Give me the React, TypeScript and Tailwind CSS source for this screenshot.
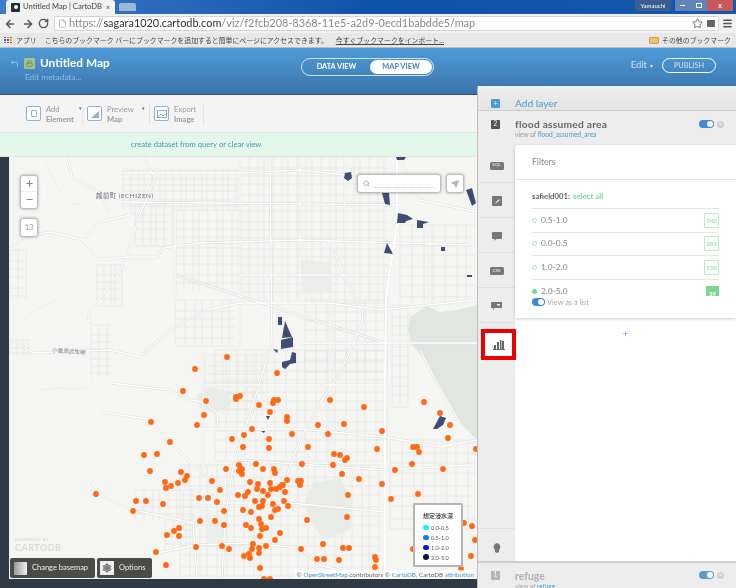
import React from "react";
import { ArrowLeft, ArrowRight, RotateCw, Star, Menu, Minus, Plus, Search, Send, Settings, File, CornerUpLeft, Lock } from "lucide-react";

const DOTS = [
  [227,357],[195,369],[277,373],[183,391],[206,401],[236,397],[240,396],[236,399],[259,405],[273,403],[274,400],[278,400],[270,412],
  [204,415],[287,417],[287,421],[151,422],[197,425],[252,429],[244,435],[170,442],[232,439],[269,439],[243,447],[269,448],[144,455],[157,454],
  [239,465],[256,464],[226,469],[263,469],[242,469],[274,469],[330,400],[364,407],[424,402],[440,413],[450,425],[448,438],[318,425],[344,424],
  [292,434],[328,434],[382,431],[308,447],[377,449],[413,447],[417,447],[419,452],[476,449],[334,454],[340,455],[347,458],[345,460],[302,464],
  [333,465],[412,464],[395,470],[443,469],[342,474],[359,479],[287,480],[298,481],[301,481],[300,485],[283,485],[280,487],[382,484],[150,471],
  [181,472],[239,471],[242,474],[275,473],[187,476],[185,480],[165,482],[178,483],[171,486],[166,488],[212,481],[250,482],[258,484],[270,483],
  [282,485],[271,489],[276,489],[285,492],[220,490],[257,489],[263,491],[248,492],[238,495],[245,496],[268,495],[96,494],[136,501],[146,501],
  [199,498],[208,498],[217,502],[255,501],[263,501],[284,501],[273,504],[163,504],[259,507],[262,506],[288,506],[133,511],[224,511],[243,510],
  [251,512],[275,510],[278,509],[271,517],[259,519],[200,521],[215,521],[224,525],[246,525],[261,524],[251,528],[262,529],[266,528],[179,528],
  [174,531],[280,533],[167,535],[179,536],[260,536],[275,540],[253,544],[266,546],[252,549],[259,548],[196,547],[222,546],[229,549],[156,552],
  [259,553],[249,554],[244,556],[250,558],[166,565],[260,568],[264,579],[270,579],[348,495],[347,517],[307,520],[323,544],[301,549],[343,548],
  [349,548],[317,559],[324,559],[339,560],[375,557],[376,560],[375,567],[418,494],[391,499],[413,549],[464,523],[472,526],[475,540],[471,556],[461,569],
];

const AREAS = [
  "345,173 351,172 352,178 348,181 344,178","382,193 389,193 390,205 385,204","398,213 407,215 413,219 406,221 405,223 397,223",
  "417,220 429,222 423,224 423,228 417,228","466,190 472,188 476,203 472,206","387,243 393,254 384,253","441,247 445,247 445,251 441,251",
  "467,275 472,275 472,277 467,277","278,317 282,317 282,325 278,325","285,321 292,337 282,338","281,340 293,337 293,347 281,349",
  "273,349 278,350 277,353","292,352 296,353 296,363 290,364 285,369 282,367 282,362 290,360","440,416 446,418 443,425 437,429 433,429",
  "396,157 406,157 404,160 397,160","266,416 270,416 268,420","261,431 265,431 264,433",
];

const MAIN_ROADS = [
  "397,157 397,225 390,270 386,300 385,400 385,579",
  "143,157 155,178 138,220 128,253 117,277 90,310 88,320 93,325",
  "10,247 33,235 50,232 83,240 98,260 127,257 157,257 163,248 200,243 300,240 470,245",
  "68,157 72,177 100,193 110,213",
  "83,240 100,222 130,215 137,208",
  "10,338 33,353 110,350 140,357 173,327 207,310 240,303 330,303 380,310 477,300",
  "327,240 340,263 343,275 362,310 363,320 352,347 340,373 322,400 300,440 285,480",
  "110,383 170,390 190,400 203,402 217,413 218,428",
  "100,412 147,419 173,445 193,465 207,477 250,500",
  "203,350 203,470",
  "270,350 233,467 225,520 222,579",
  "90,480 103,497 133,510 167,517 193,523 197,579",
  "157,553 197,545 247,543 300,548 320,565 345,572",
  "200,503 290,503 385,512",
  "203,429 300,429 385,437 440,447 477,440",
  "120,202 400,205",
  "123,173 240,173 300,170 345,175",
  "420,350 437,383 447,400 460,423",
  "175,275 385,343 477,343",
  "240,460 385,470 470,465",
  "400,160 420,200 477,212",
  "240,157 240,350",
  "300,157 300,300",
  "270,157 272,350",
  "345,157 345,240",
  "430,230 430,305",
  "443,440 443,579",
  "330,303 330,470",
  "240,275 390,275",
  "205,385 385,385",
  "300,343 385,343",
  "175,210 175,300",
];

const GRIDS = [
  [123,170,115,40,7,7],[175,210,65,80,8,9],[135,205,35,40,7,8],[97,265,25,40,6,8],[91,325,20,52,7,8],[175,300,60,45,9,9],
  [240,157,148,145,8,9],[400,225,75,78,11,10],[305,300,80,70,10,10],[215,350,170,110,10,10],[180,465,200,112,9,10],
  [390,440,85,90,11,11],[135,490,60,30,8,8],[165,520,30,30,7,8],[205,355,60,60,8,9],[10,250,14,50,7,9],[10,340,20,16,6,6],[392,305,16,100,7,10],
];

// thin street grid, slightly uneven so it doesn't read as graph paper
function gridPath([x, y, w, h, dx, dy]: number[]) {
  let d = "";
  for (let i = 0, px = x; px <= x + w; i++, px += dx) d += `M${px + (i * 7) % 3} ${y}V${y + h}`;
  for (let i = 0, py = y; py <= y + h; i++, py += dy) d += `M${x} ${py + (i * 5) % 3}H${x + w}`;
  return d;
}

function MapDrawing() {
  return (
    <svg viewBox="9 157 468 422" className="absolute inset-0 h-full w-full">
      <rect x="9" y="157" width="468" height="422" fill="#f5f5f3" />
      {GRIDS.map((g, i) => (
        <path key={i} d={gridPath(g)} fill="none" stroke="#e6e6e5" strokeWidth="0.8" />
      ))}
      <path d="M20 325C40 300 50 310 65 290M40 390C70 385 80 395 95 380M45 163C60 190 70 215 85 200" fill="none" stroke="#ebebea" strokeWidth="0.8" />
      <polygon points="410,317 427,306 440,312 457,310 477,305 477,440 462,425 447,400 437,383 425,360 412,345 408,330" fill="#e1e6e3" />
      <polygon points="305,500 313,483 340,478 352,500 350,530 323,540 307,513" fill="#eaecea" />
      <polygon points="197,395 210,387 228,392 231,405 215,413 200,408" fill="#eaecea" />
      <polygon points="301,260 330,262 333,293 303,293" fill="#eceeec" />
      <polygon points="208,517 222,520 224,547 207,545" fill="#eceeec" />
      {MAIN_ROADS.map((p, i) => (
        <polyline key={i} points={p} fill="none" stroke="#dcdcdb" strokeWidth="2.4" strokeLinejoin="round" />
      ))}
      {MAIN_ROADS.map((p, i) => (
        <polyline key={i} points={p} fill="none" stroke="#ffffff" strokeWidth={i === 0 ? 2.2 : 1.3} strokeLinejoin="round" />
      ))}
      {AREAS.map((p) => (
        <polygon key={p} points={p} fill="#3f4e74" />
      ))}
      {DOTS.map(([x, y], i) => (
        <circle key={i} cx={x} cy={y} r="2.9" fill="#ff6a13" />
      ))}
      <text x="96" y="198" fontSize="6.4" letterSpacing="0.5" fill="#6f7480">越前町 (ECHIZEN)</text>
      <text x="52" y="352" fontSize="5.6" fill="#7f838c" transform="rotate(4 52 352)">小豊原武生線</text>
    </svg>
  );
}

function BrowserChrome() {
  return (
    <div className="flex flex-col">
      <div className="flex h-[14px] items-start bg-gradient-to-r from-[#3f7cc6] via-[#0f53a8] to-[#1557ae] pl-[6px]">
        <div className="flex h-[14px] w-[109px] items-center rounded-t-[3px] bg-[#f2f2f2] pl-[5px] text-[7.6px] text-[#444]">
          <span className="mr-[3px] flex h-[9px] w-[9px] shrink-0 items-center justify-center rounded-[1px] bg-[#22303a]">
            <span className="h-[4px] w-[4px] rounded-full bg-white" />
          </span>
          <span className="whitespace-nowrap">Untitled Map | CartoDB</span>
          <span className="ml-auto pr-[5px] text-[7px]">×</span>
        </div>
        <div className="mt-[3px] ml-[4px] h-[8px] w-[17px] rounded-t-[2px] bg-[#9db7d8]" />
        <div className="ml-auto flex h-[11px] items-stretch gap-[4px] pr-[3px]">
          <div className="flex w-[36px] items-center justify-center rounded-b-[2px] bg-[#385d8e] text-[6px] text-white">Yamauchi</div>
          <div className="flex w-[58px] rounded-b-[2px] text-white">
            <div className="flex w-[15px] items-center justify-center bg-[#5f86b6]"><span className="h-[1.5px] w-[5px] bg-white" /></div>
            <div className="flex w-[17px] items-center justify-center bg-[#5f86b6]"><span className="h-[5px] w-[6px] border border-white" /></div>
            <div className="flex w-[26px] items-center justify-center bg-[#c9575a] text-[7px] font-bold">x</div>
          </div>
        </div>
      </div>
      <div className="flex h-[19px] items-center bg-[#f1f1f1] pl-[4px] pr-[3px] text-[#555]">
        <ArrowLeft size={12} strokeWidth={3} className="shrink-0" />
        <ArrowRight size={12} strokeWidth={3} className="ml-[6px] shrink-0" />
        <RotateCw size={11} strokeWidth={3} className="ml-[4px] shrink-0" />
        <div className="ml-[5px] flex h-[15px] flex-1 items-center rounded-[1px] border border-[#d5d5d5] bg-white pl-[3px] text-[10.9px] text-[#8a8a8a]">
          <File size={9} className="mr-[2px] shrink-0 text-[#aaa]" />
          <span>https://</span><span className="text-[#333]">sagara1020.cartodb.com</span><span>/viz/f2fcb208-8368-11e5-a2d9-0ecd1babdde5/map</span>
          <Star size={11} className="ml-auto mr-[4px] text-[#666]" />
          <span className="mr-[3px] h-[7px] w-[8px] bg-[#666]" />
        </div>
        <Menu size={11} strokeWidth={3} className="ml-[3px] shrink-0" />
      </div>
      <div className="flex h-[15px] items-center border-b border-[#bdbdbd] bg-[#e8e8e8] pl-[4px] pr-[5px] text-[6.9px] text-[#444]">
        <span className="mr-[2px] grid h-[7px] w-[8px] grid-cols-3 gap-px">
          {["#d33","#e93","#3a3","#36c","#d33","#e93","#3a3","#36c","#d33"].map((c, i) => (
            <span key={i} className="h-[1.5px]" style={{ backgroundColor: c }} />
          ))}
        </span>
        <span className="ml-[2px]">アプリ</span>
        <span className="ml-[8px]">こちらのブックマーク バーにブックマークを追加すると簡単にページにアクセスできます。</span>
        <span className="ml-[8px] underline">今すぐブックマークをインポート...</span>
        <span className="ml-auto mr-[3px] h-[7px] w-[10px] rounded-[1px] border border-[#c9a04a] bg-[#eec56f]" />
        <span>その他のブックマーク</span>
      </div>
    </div>
  );
}

function CartoHeader() {
  return (
    <div className="relative flex h-[47px] items-start border-b border-[#35516b] bg-gradient-to-b from-[#4f9cd9] to-[#3a74ab] text-white">
      <div className="flex flex-col">
        <div className="mt-[8px] flex items-center">
          <CornerUpLeft size={9} className="ml-[10px] text-[#a5c9e8]" />
          <span className="ml-[5px] flex h-[11px] w-[11px] items-center justify-center rounded-[1px] bg-[#a3c28a]">
            <Lock size={7} className="text-[#5f7a4c]" />
          </span>
          <span className="ml-[5px] text-[11.8px] font-bold leading-[14px]">Untitled Map</span>
        </div>
        <span className="ml-[25px] mt-[2px] text-[8.3px] leading-[10px] text-[#8dbde2]">Edit metadata...</span>
      </div>
      <div className="absolute left-[301px] top-[10px] flex h-[18px] w-[133px] items-center rounded-full border border-[#cfe3f3] p-px text-[7.4px] font-bold">
        <span className="w-[67px] text-center">DATA VIEW</span>
        <span className="flex h-full flex-1 items-center justify-center rounded-full bg-white text-[#4d84b5]">MAP VIEW</span>
      </div>
      <div className="ml-auto mt-[10px] flex items-center pr-[20px] text-[9.5px]">
        <span className="text-[#cfe3f3]">Edit</span>
        <span className="ml-[3px] text-[6px] text-[#cfe3f3]">▾</span>
        <span className="ml-[9px] flex h-[15px] w-[54px] items-center justify-center rounded-full border border-white text-[7.4px] text-[#cfe3f3]">PUBLISH</span>
      </div>
    </div>
  );
}

function ToolButton({ top, bottom, caret, icon, width }: { top: string; bottom: string; caret?: boolean; icon: React.ReactNode; width: string }) {
  return (
    <div className={`flex h-[22px] items-center gap-[5px] border-r border-[#e3e3e3] pr-[4px] ${width}`}>
      <span className="flex h-[15px] w-[15px] shrink-0 items-center justify-center rounded-[2px] border border-[#8fb2d2] bg-white">{icon}</span>
      <div className="flex flex-col text-[7.6px] leading-[10px] text-[#9a9a9a]">
        <span>{top}</span>
        <span className="font-bold">{bottom}</span>
      </div>
      {caret && <span className="-mt-[10px] ml-auto text-[5px] text-[#666]">▾</span>}
    </div>
  );
}

function MapToolbar() {
  return (
    <>
      <div className="flex h-[37px] items-center gap-[4px] bg-[#f4f4f4] pl-[26px]">
        <ToolButton width="w-[57px]" top="Add" bottom="Element" caret icon={<span className="h-[7px] w-[6px] rounded-[1px] border border-[#8fb2d2]" />} />
        <ToolButton width="w-[63px]" top="Preview" bottom="Map" caret icon={<svg width="10" height="8" viewBox="0 0 10 8"><path d="M1 8L9 1V8Z" fill="#8fb2d2" /></svg>} />
        <ToolButton width="w-[50px]" top="Export" bottom="Image" icon={<svg width="10" height="8" viewBox="0 0 10 8"><rect x=".5" y=".5" width="9" height="7" fill="none" stroke="#8fb2d2" /><path d="M1 7L4 4L6 6L8 4L9 5" fill="none" stroke="#8fb2d2" /></svg>} />
      </div>
      <div className="flex h-[25px] items-center border-y border-[#dbe9df] bg-[#e3f7ea] pl-[131px] text-[7.6px] text-[#6b8a8a]">
        <span className="text-[#3f9cb8]">create dataset from query</span>
        <span className="mx-[2px]">or</span>
        <span className="text-[#3f9cb8]">clear view</span>
      </div>
    </>
  );
}

function MapPanel() {
  const card = "bg-white shadow-[0_0_3px_1px_rgba(0,0,0,0.35)]";
  return (
    <div className="relative h-[422px] w-[468px] overflow-hidden">
      <MapDrawing />
      <div className={`absolute left-[12px] top-[19px] flex h-[32px] w-[16px] flex-col items-center rounded-[2px] text-[#888] ${card}`}>
        <Plus size={9} strokeWidth={3} className="mt-[3px]" />
        <span className="mt-[3px] h-px w-full bg-[#eee]" />
        <Minus size={9} strokeWidth={3} className="mt-[3px]" />
      </div>
      <div className={`absolute left-[12px] top-[62px] flex h-[17px] w-[16px] items-center justify-center rounded-[2px] text-[7.5px] text-[#999] ${card}`}>13</div>
      <div className={`absolute left-[349px] top-[18px] flex h-[17px] w-[82px] items-center rounded-[2px] pl-[5px] ${card}`}>
        <Search size={7} strokeWidth={3} className="text-[#aaa]" />
        <span className="ml-[4px] mt-[8px] h-0 w-[60px] border-b border-dotted border-[#ccc]" />
      </div>
      <div className={`absolute left-[438px] top-[18px] flex h-[17px] w-[16px] items-center justify-center rounded-[2px] ${card}`}>
        <Send size={8} className="text-[#aaa]" fill="#bbb" />
      </div>
      <div className="absolute left-[6px] top-[380px] flex flex-col text-[#dadada]">
        <span className="text-[4.5px] font-bold leading-[6px] tracking-[0.5px]">POWERED BY</span>
        <span className="text-[9px] font-bold leading-[9px] tracking-[0.5px]">CARTODB</span>
      </div>
      <div className="absolute left-[1px] top-[401px] flex h-[20px] gap-[2px] whitespace-nowrap text-[7.5px] text-[#eee]">
        <div className="flex w-[85px] items-center rounded-[2px] bg-[#4a4a48] pl-[4px]">
          <span className="h-[13px] w-[13px] shrink-0 rounded-[1px] bg-gradient-to-r from-[#999] to-[#f3f3f3]" />
          <span className="ml-[5px]">Change basemap</span>
        </div>
        <div className="flex w-[55px] items-center rounded-[2px] bg-[#4a4a48] pl-[3px]">
          <span className="flex h-[14px] w-[14px] shrink-0 items-center justify-center bg-[#eee]"><Settings size={10} className="text-[#666]" fill="#999" /></span>
          <span className="ml-[5px]">Options</span>
        </div>
      </div>
      <div className="absolute left-[404px] top-[346px] flex h-[64px] w-[50px] flex-col rounded-[2px] border-2 border-[#b5b5b5] bg-white pl-[8px] pt-[6px] text-[#555]">
        <span className="text-[6px] font-bold leading-[9px]">想定浸水深</span>
        <div className="mt-[4px] flex flex-col gap-[2.9px] text-[5.6px] leading-[7px]">
          {[["#12f5f0","0.0-0.5"],["#0f7cf0","0.5-1.0"],["#0a10e0","1.0-2.0"],["#0b0f45","2.0-5.0"]].map(([c, t]) => (
            <div key={t} className="flex items-center gap-[2.5px]">
              <span className="h-[5.5px] w-[5.5px] rounded-full" style={{ backgroundColor: c }} />
              <span>{t}</span>
            </div>
          ))}
        </div>
      </div>
      <div className="absolute right-[3px] top-[413px] whitespace-nowrap bg-white/70 pl-[2px] text-[6.3px] leading-[9px] text-[#666]">
        © <span className="text-[#3f9cc6]">OpenStreetMap</span> contributors © <span className="text-[#3f9cc6]">CartoDB</span>, CartoDB <span className="text-[#3f9cc6]">attribution</span>
      </div>
    </div>
  );
}

function Toggle({ muted }: { muted?: boolean }) {
  return (
    <span className={`flex h-[8px] w-[15px] items-center justify-end rounded-full pr-px ${muted ? "bg-[#5b9ad2]" : "bg-[#3f8cd0]"}`}>
      <span className="h-[6px] w-[6px] rounded-full bg-white" />
    </span>
  );
}

function CloseDot() {
  return (
    <span className="flex h-[7px] w-[7px] items-center justify-center rounded-full bg-[#d0d0d0] text-[5px] leading-none text-white">×</span>
  );
}

const badge = "flex h-[8px] w-[14px] items-center justify-center rounded-[1.5px] bg-[#777] text-[4.5px] font-bold leading-none text-[#ddd]";

const TABS: { key: string; h: string; icon: React.ReactNode }[] = [
  { key: "sql", h: "h-[38px] pt-[4px]", icon: <span className={badge}>SQL</span> },
  { key: "wizard", h: "h-[35px] pt-[2px]", icon: <svg width="10" height="10" viewBox="0 0 10 10"><rect width="10" height="10" rx="1" fill="#777" /><path d="M3 7L7 3L8 4L4 7.5Z" fill="#eee" /></svg> },
  { key: "infowindow", h: "h-[35px] pt-[2px]", icon: <svg width="10" height="9" viewBox="0 0 10 9"><path d="M1 0H9Q10 0 10 1V6Q10 7 9 7H4L2.500 9V7H1Q0 7 0 6V1Q0 0 1 0Z" fill="#777" /></svg> },
  { key: "css", h: "h-[35px] pt-[2px]", icon: <span className={badge}>CSS</span> },
  { key: "legend", h: "h-[35px] pt-[2px]", icon: <svg width="11" height="10" viewBox="0 0 11 10"><path d="M0 1H11V7H3V10L2 7H0Z" fill="#777" /><rect x="6" y="3" width="3" height="1.500" fill="#eee" /></svg> },
];

function FilterRow({ label, count, active }: { label: string; count: string; active?: boolean }) {
  return (
    <div className={`flex ${active ? "h-[23px] items-start pt-[6px]" : "h-[23.6px] items-center border-b border-[#e8e8e8]"}`}>
      <span className={`${active ? "mt-[3px] bg-[#7bd88f]" : "border border-[#a8e6b6]"} h-[5px] w-[5px] rounded-full`} />
      <span className="ml-[4px] text-[8.4px] leading-[11px] text-[#888]">{label}</span>
      {active ? (
        <span className="ml-auto h-[10px] w-[13px] overflow-hidden bg-[#7bd88f] pt-[3px] text-center text-[6px] font-bold text-white">39</span>
      ) : (
        <span className="ml-auto flex h-[15px] w-[15px] items-center justify-center rounded-[1px] border border-[#bdeac8] text-[6px] font-bold text-[#a5dcb4]">{count}</span>
      )}
    </div>
  );
}

function LayerPanel() {
  return (
    <div className="absolute left-[477px] top-[86px] flex h-[502px] w-[259px] flex-col rounded-tl-[3px] border-l border-[#bdbdbd] bg-[#ededed] text-[#666]">
      <div className="flex h-[24px] shrink-0 items-end bg-gradient-to-b from-[#efefef] to-[#e4e4e4] pl-[13px]">
        <span className="mb-[2px] flex h-[9px] w-[9px] items-center justify-center rounded-[1px] bg-[#4a9cd0] text-[7px] leading-none text-white">+</span>
        <span className="ml-[15px] text-[10.2px] leading-[13px] text-[#4d9cc6]">Add layer</span>
      </div>
      <div className="flex min-h-0 flex-1 flex-col border-t border-[#cfcfcf]">
        <div className="flex h-[34px] shrink-0 items-start pl-[13px] pr-[12px] pt-[8px]">
          <span className="mt-px flex h-[9px] w-[9px] items-center justify-center rounded-[1px] bg-[#555] text-[6.5px] font-bold leading-none text-[#ddd]">2</span>
          <div className="ml-[15px] flex flex-col">
            <span className="text-[10.2px] font-bold leading-[10px] tracking-[0.25px] text-[#666]">flood assumed area</span>
            <span className="mt-[1px] text-[6.6px] leading-[8px] text-[#999]">view of <span className="text-[#4d9cc6]">flood_assumed_area</span></span>
          </div>
          <div className="ml-auto flex items-center gap-[3px] pt-px"><Toggle /><CloseDot /></div>
        </div>
        <div className="flex min-h-0 flex-1">
          <div className="flex w-[37px] shrink-0 flex-col">
            {TABS.map((t) => (
              <div key={t.key} className={`flex shrink-0 items-center justify-center border-b border-[#e0e0e0] ${t.h}`}>{t.icon}</div>
            ))}
            <div className="mt-auto flex h-[33px] items-center justify-center border-t border-[#e0e0e0] pt-[6px]">
              <svg width="8" height="10" viewBox="0 0 8 10"><path d="M4 0A4 4 0 0 1 6 7V9L4 10L2 9V7A4 4 0 0 1 4 0Z" fill="#777" /></svg>
            </div>
          </div>
          <div className="flex min-w-0 flex-1 flex-col rounded-tl-[3px] bg-white">
            <div className="flex h-[173px] shrink-0 flex-col px-[17px] shadow-[0_1px_3px_rgba(0,0,0,0.2)]">
              <div className="-mx-[17px] flex h-[35px] shrink-0 items-center border-b border-[#e8e8e8] px-[17px] text-[8.6px] text-[#888]">Filters</div>
              <div className="flex h-[29px] shrink-0 items-center border-b border-[#e4e4e4] pt-[6px] text-[7.8px] font-bold">
                <span className="text-[#666]">safield001:</span>
                <span className="ml-[3px] text-[#7bd88f]">select all</span>
              </div>
              <FilterRow label="0.5-1.0" count="342" />
              <FilterRow label="0.0-0.5" count="285" />
              <FilterRow label="1.0-2.0" count="150" />
              <FilterRow label="2.0-5.0" count="39" active />
              <div className="-mt-[6px] flex items-center gap-[2px] text-[7.4px] text-[#aaa]">
                <span className="flex h-[8px] w-[13px] items-center justify-end rounded-full bg-[#3f8cd0] pr-px"><span className="h-[6px] w-[6px] rounded-full bg-white" /></span>
                <span>View as a list</span>
              </div>
            </div>
            <div className="flex justify-center pt-[12px] text-[#7ea8d8]"><Plus size={7} strokeWidth={2.5} /></div>
          </div>
        </div>
      </div>
      <div className="flex h-[27px] shrink-0 items-start border-t-2 border-[#cdcdcd] pl-[13px] pr-[12px] pt-[8px]">
        <span className="flex h-[9px] w-[9px] items-center justify-center rounded-[1px] bg-[#b5b5b5] text-[6.5px] font-bold leading-none text-[#eee]">1</span>
        <div className="ml-[15px] flex flex-col">
          <span className="text-[10.4px] font-bold leading-[10px] text-[#b0b0b0]">refuge</span>
          <span className="mt-[1px] text-[6.4px] leading-[8px] text-[#aaa]">view of <span className="text-[#4d9cc6]">refuge</span></span>
        </div>
        <div className="ml-auto flex items-center gap-[3px]"><Toggle muted /><CloseDot /></div>
      </div>
      {/* red callout + chart icon over the tab rail */}
      <div className="absolute left-[3px] top-[243px] flex h-[31px] w-[35px] items-center justify-center border-4 border-[#ee0000] bg-white">
        <svg width="12" height="11" viewBox="0 0 12 11"><path d="M0 10.500H12" stroke="#666" /><path d="M1 10V6H3V10ZM4 10V3H6V10ZM7 10V1H8.500V10ZM9 10V2H11V10Z" fill="#666" /></svg>
      </div>
    </div>
  );
}

export default function App() {
  return (
    <div className="relative flex h-[588px] w-[736px] flex-col overflow-hidden bg-[#2f3a44] font-['Lato','Noto_Sans_CJK_JP',sans-serif] blur-[0.35px]">
      <BrowserChrome />
      <CartoHeader />
      <MapToolbar />
      <div className="flex pl-[9px]">
        <MapPanel />
      </div>
      <LayerPanel />
    </div>
  );
}
